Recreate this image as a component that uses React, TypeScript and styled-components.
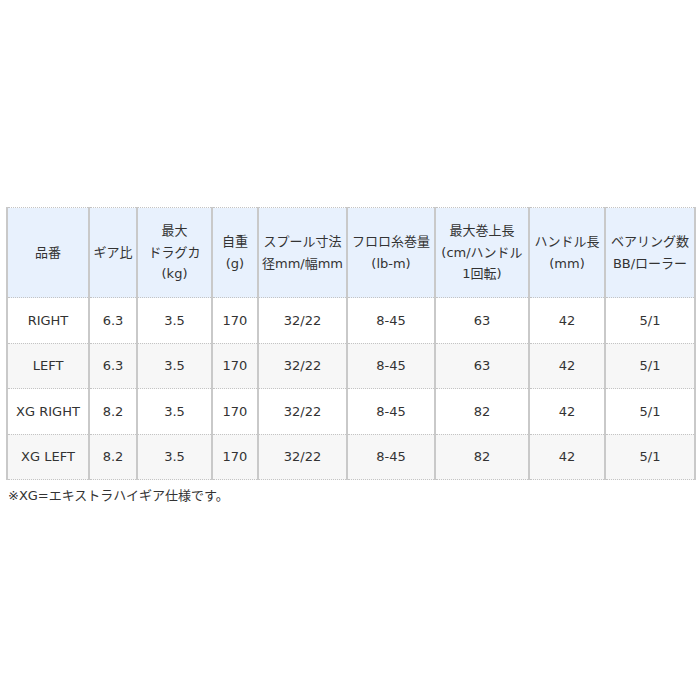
import React from 'react';
import styled, { createGlobalStyle } from 'styled-components';

const GlobalStyle = createGlobalStyle`
    html, body {
        margin: 0;
        padding: 0;
        background: #ffffff;
    }
    body {
        font-family: "DejaVu Sans", "Noto Sans CJK JP", sans-serif;
        color: #333333;
    }
`;

const Page = styled.div`
    padding: 207px 6px 0 6px;
    width: 700px;
    box-sizing: border-box;
`;

const SpecTable = styled.table`
    width: 688px;
    table-layout: fixed;
    border-collapse: collapse;
    font-size: 13px;
`;

const HeadCell = styled.th`
    background: #e8f1fd;
    font-weight: normal;
    text-align: center;
    vertical-align: middle;
    height: 89px;
    padding: 0 1px;
    line-height: 21.5px;
    border-left: 2px solid #c9c9c9;
    border-right: 2px solid #c9c9c9;
    border-top: 1px dotted #c4c4c4;
    border-bottom: 1px dotted #c4c4c4;
    white-space: nowrap;
`;

interface RowProps {
    $shade?: boolean;
}

const Row = styled.tr<RowProps>`
    background: ${({ $shade }) => ($shade ? '#f7f7f7' : '#ffffff')};
`;

const Cell = styled.td`
    text-align: center;
    vertical-align: middle;
    height: 44.5px;
    padding: 0;
    border-left: 2px solid #c9c9c9;
    border-right: 2px solid #c9c9c9;
    border-top: 1px dotted #c4c4c4;
    border-bottom: 1px dotted #c4c4c4;
    white-space: nowrap;
`;

const Note = styled.p`
    margin: 5px 0 0 2px;
    font-size: 13px;
    color: #333333;
`;

const widths = [82, 48, 75, 46, 89, 88, 94, 76, 90];

const headers: string[][] = [
    ['品番'],
    ['ギア比'],
    ['最大', 'ドラグカ', '(kg)'],
    ['自重', '(g)'],
    ['スプール寸法', '径mm/幅mm'],
    ['フロロ糸巻量', '(lb-m)'],
    ['最大巻上長', '(cm/ハンドル', '1回転)'],
    ['ハンドル長', '(mm)'],
    ['ベアリング数', 'BB/ローラー'],
];

const rows: string[][] = [
    ['RIGHT', '6.3', '3.5', '170', '32/22', '8-45', '63', '42', '5/1'],
    ['LEFT', '6.3', '3.5', '170', '32/22', '8-45', '63', '42', '5/1'],
    ['XG RIGHT', '8.2', '3.5', '170', '32/22', '8-45', '82', '42', '5/1'],
    ['XG LEFT', '8.2', '3.5', '170', '32/22', '8-45', '82', '42', '5/1'],
];

export default function App() {
    return (
        <>
            <GlobalStyle />
            <Page>
                <SpecTable>
                    <colgroup>
                        {widths.map((w, i) => (
                            <col key={i} style={{ width: w }} />
                        ))}
                    </colgroup>
                    <thead>
                        <tr>
                            {headers.map((lines, i) => (
                                <HeadCell key={i}>
                                    {lines.map((l, j) => (
                                        <React.Fragment key={j}>
                                            {j > 0 && <br />}
                                            {l}
                                        </React.Fragment>
                                    ))}
                                </HeadCell>
                            ))}
                        </tr>
                    </thead>
                    <tbody>
                        {rows.map((r, i) => (
                            <Row key={i} $shade={i % 2 === 1}>
                                {r.map((v, j) => (
                                    <Cell key={j}>{v}</Cell>
                                ))}
                            </Row>
                        ))}
                    </tbody>
                </SpecTable>
                <Note>※XG=エキストラハイギア仕様です。</Note>
            </Page>
        </>
    );
}
